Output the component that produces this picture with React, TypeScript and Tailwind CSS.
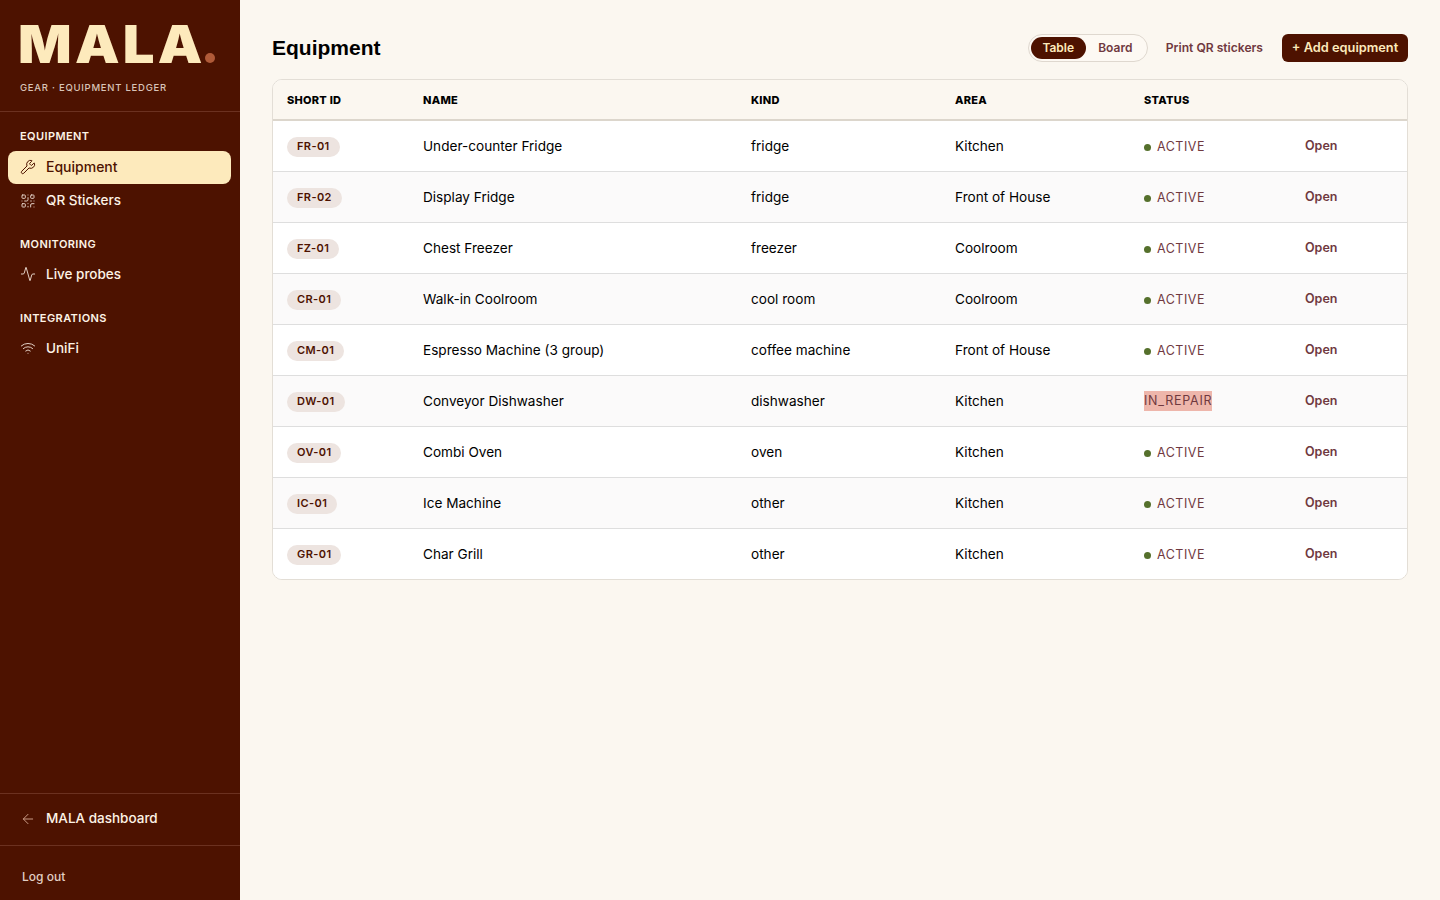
import { ArrowLeft, Activity, QrCode, Wifi, Wrench } from 'lucide-react';

const rows = [
  { id: 'FR-01', name: 'Under-counter Fridge', kind: 'fridge', area: 'Kitchen' },
  { id: 'FR-02', name: 'Display Fridge', kind: 'fridge', area: 'Front of House' },
  { id: 'FZ-01', name: 'Chest Freezer', kind: 'freezer', area: 'Coolroom' },
  { id: 'CR-01', name: 'Walk-in Coolroom', kind: 'cool room', area: 'Coolroom' },
  { id: 'CM-01', name: 'Espresso Machine (3 group)', kind: 'coffee machine', area: 'Front of House' },
  { id: 'DW-01', name: 'Conveyor Dishwasher', kind: 'dishwasher', area: 'Kitchen', repair: true },
  { id: 'OV-01', name: 'Combi Oven', kind: 'oven', area: 'Kitchen' },
  { id: 'IC-01', name: 'Ice Machine', kind: 'other', area: 'Kitchen' },
  { id: 'GR-01', name: 'Char Grill', kind: 'other', area: 'Kitchen' },
];

export default function App() {
  return (
    <div className="flex h-[900px] bg-[#fbf7f0] font-['Inter',sans-serif] text-black overflow-hidden">
      <aside className="flex w-[240px] shrink-0 flex-col bg-[#4d1200] text-[#fdeabc]">
        <div className="h-[112px] shrink-0 border-b border-[#6b3120] px-5 pt-[15px]">
          <div className="ml-[-2px] flex items-baseline text-[52px] leading-[60px] font-black tracking-[3px]">
            <span className="origin-left scale-x-[1.08]">MALA</span>
            <span className="ml-[13px] inline-block size-[10px] rounded-full bg-[#b05a38]" />
          </div>
          <div className="mt-[6px] text-[9.5px] leading-[14px] font-medium tracking-[0.75px] text-[#d9c4b8]">GEAR · EQUIPMENT LEDGER</div>
        </div>

        <nav className="flex-1 pl-2 pr-[9px] pt-4">
          <div className="px-3 text-[11px] leading-4 font-semibold tracking-[0.4px] text-[#fdf3e6]">EQUIPMENT</div>
          <div className="mt-[7px] flex h-[33px] items-center gap-[10px] rounded-lg bg-[#fdeabc] px-3 pb-[2px] text-[14px] font-medium text-[#4d1200]">
            <Wrench size={16} strokeWidth={1.5} />
            Equipment
          </div>
          <div className="flex h-[34px] items-center gap-[10px] px-3 pb-[1px] text-[13.5px] font-medium text-[#fdf3e6]">
            <QrCode size={16} strokeWidth={1.5} className="text-[#e2cfc4]" />
            QR Stickers
          </div>
          <div className="mt-[18px] px-3 text-[11px] leading-4 font-semibold tracking-[0.4px] text-[#fdf3e6]">MONITORING</div>
          <div className="mt-[5px] flex h-[34px] items-center gap-[10px] px-3 text-[13.5px] font-medium text-[#fdf3e6]">
            <Activity size={16} strokeWidth={1.5} className="text-[#e2cfc4]" />
            Live probes
          </div>
          <div className="mt-[19px] px-3 text-[11px] leading-4 font-semibold tracking-[0.4px] text-[#fdf3e6]">INTEGRATIONS</div>
          <div className="mt-[5px] flex h-[34px] items-center gap-[10px] px-3 text-[13.5px] font-medium text-[#fdf3e6]">
            <Wifi size={16} strokeWidth={1.5} className="text-[#e2cfc4]" />
            UniFi
          </div>
        </nav>

        <div className="flex h-[53px] shrink-0 items-center gap-[10px] border-y border-[#6b3120] px-5 pb-[2px] text-[13.5px] font-medium text-[#fdf3e6]">
          <ArrowLeft size={16} strokeWidth={1.5} className="text-[#c99a85]" />
          MALA dashboard
        </div>
        <div className="flex h-[54px] shrink-0 items-center px-[22px] pt-2 text-[12px] font-medium text-[#e2cfc4]">Log out</div>
      </aside>

      <main className="flex-1 px-8 pt-8">
        <div className="flex h-8 items-center">
          <h1 className="mt-[-1px] text-[21px] font-bold font-['Liberation_Sans',sans-serif]">Equipment</h1>
          <div className="ml-auto flex h-7 w-[120px] items-center rounded-full border border-[#dfd8cf] bg-[#fdf9f3] p-[2px] text-[12px] font-semibold">
            <span className="flex h-[22px] w-[55px] items-center justify-center rounded-full bg-[#4d1200] text-[#fdeabc]">Table</span>
            <span className="flex-1 text-center text-[#70393f]">Board</span>
          </div>
          <span className="ml-[18px] text-[12.1px] font-semibold text-[#70393f]">Print QR stickers</span>
          <button className="ml-[19px] h-7 w-[126px] rounded-md bg-[#4d1200] text-[12.8px] font-semibold text-[#fdeabc]">+ Add equipment</button>
        </div>

        <div className="mt-[15px] overflow-hidden rounded-[10px] border border-[#e3ded6] bg-white">
          <div className="grid h-[41px] grid-cols-[136px_328px_204px_189px_140px_1fr] items-center border-b-2 border-[#dcd6cc] bg-[#fbf7f0] pt-[1px] text-[11px] font-extrabold tracking-[0.25px]">
            <span className="pl-[14px]">SHORT ID</span>
            <span className="pl-[14px]">NAME</span>
            <span className="pl-[14px]">KIND</span>
            <span className="pl-[14px]">AREA</span>
            <span className="pl-[14px]">STATUS</span>
            <span />
          </div>
          {rows.map((r, i) => (
            <div
              key={r.id}
              className={`grid h-[51px] grid-cols-[136px_328px_204px_189px_140px_1fr] items-center border-b border-[#dedede] text-[13.6px] last:h-[50px] last:border-b-0 ${
                i % 2 === 1 ? 'bg-[#fbfafa]' : 'bg-white'
              }`}
            >
              <span className="pl-[14px]">
                <span className="inline-flex h-5 items-center rounded-full bg-[#ede4e0] px-[10px] text-[11px] font-semibold tracking-[0.4px] text-[#4d1200]">
                  {r.id}
                </span>
              </span>
              <span className="pl-[14px]">{r.name}</span>
              <span className="pl-[14px]">{r.kind}</span>
              <span className="pl-[14px]">{r.area}</span>
              <span className={`pl-[14px] text-[12.5px] tracking-[0.5px] text-[#70393f] ${r.repair ? '' : 'pt-[2px]'}`}>
                {r.repair ? (
                  <span className="inline-block bg-[#eeb6ab] leading-5 tracking-[0.75px]">IN_REPAIR</span>
                ) : (
                  <span className="flex items-center gap-[6px]">
                    <span className="size-[7px] rounded-full bg-[#55702c]" />
                    ACTIVE
                  </span>
                )}
              </span>
              <span className="pl-[35px] pt-[1px] text-[12.5px] font-semibold text-[#70393f]">Open</span>
            </div>
          ))}
        </div>
      </main>
    </div>
  );
}
